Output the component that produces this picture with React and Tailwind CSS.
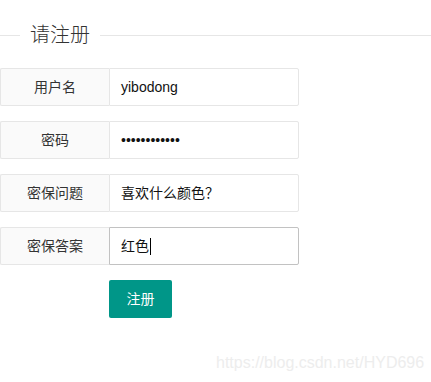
import React from 'react';

const fields = [
  { label: '用户名', value: 'yibodong' },
  { label: '密码', value: '••••••••••••' },
  { label: '密保问题', value: '喜欢什么颜色？' },
  { label: '密保答案', value: '红色', focused: true },
];

const FormRow = ({ label, value, focused }) => (
  <div className="flex h-[38px]">
    <div className="flex w-[109px] items-center justify-center rounded-l-[2px] border border-r-0 border-[#e6e6e6] bg-[#fafafa] text-[14px] text-[#333]">
      {label}
    </div>
    <div
      className={`flex w-[190px] items-center rounded-r-[2px] border pl-[11px] text-[14px] text-[#111] ${
        focused ? 'border-[#c2c2c2]' : 'border-[#e6e6e6]'
      }`}
    >
      {value}
      {focused && <span className="ml-px inline-block h-[17px] w-px bg-black" />}
    </div>
  </div>
);

const App = () => {
  return (
    <div
      className="relative h-[382px] w-[431px] overflow-hidden bg-white pt-[21px]"
      style={{ fontFamily: '"Liberation Sans", Arial, "Noto Sans CJK SC", sans-serif' }}
    >
      {/* fieldset title */}
      <div className="flex h-[28px] items-center">
        <div className="h-px w-[20px] bg-[#e6e6e6]" />
        <span className="px-[10px] text-[20px] font-light leading-[28px] text-[#333]">请注册</span>
        <div className="h-px flex-1 bg-[#e6e6e6]" />
      </div>

      {/* form */}
      <div className="mt-[19px] flex flex-col gap-[15px]">
        {fields.map((f) => (
          <FormRow key={f.label} {...f} />
        ))}
        <div className="pl-[109px]">
          <button className="h-[38px] w-[63px] rounded-[2px] bg-[#009688] text-[14px] text-white">
            注册
          </button>
        </div>
      </div>

      {/* watermark */}
      <div className="absolute left-[216px] top-[352px] text-[16px] leading-[22px] text-[#ededed]">
        https://blog.csdn.net/HYD696
      </div>
    </div>
  );
};

export default App;
